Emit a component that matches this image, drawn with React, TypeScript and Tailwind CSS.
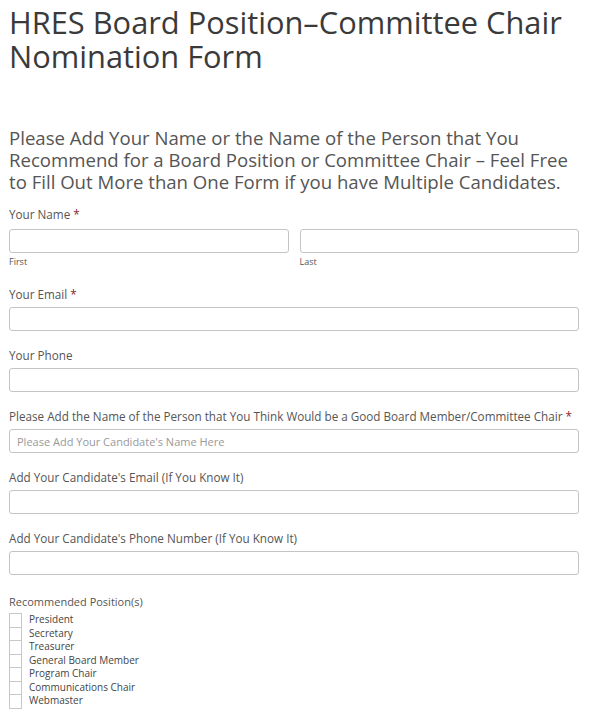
import React from "react";

const font = { fontFamily: '"Open Sans", "DejaVu Sans", sans-serif' };

const Req = () => <span className="text-[#8b2525]"> *</span>;

const Field = ({ label, required, placeholder }: { label: string; required?: boolean; placeholder?: string }) => (
  <div className="mt-[17px]">
    <label className="block text-[11.7px] leading-[15px] text-[#555]">
      {label}
      {required && <Req />}
    </label>
    <input
      type="text"
      placeholder={placeholder}
      className="mt-[5px] block w-full h-[24px] rounded-[3px] border border-[#c4c4c4] bg-white px-[7px] text-[11px] text-[#555] placeholder:text-[#999] outline-none"
    />
  </div>
);

const positions = [
  "President",
  "Secretary",
  "Treasurer",
  "General Board Member",
  "Program Chair",
  "Communications Chair",
  "Webmaster",
];

export default function App() {
  return (
    <div className="min-h-screen bg-white pl-[9px] pr-[11px] pb-2" style={font}>
      <h1 className="pt-[5px] text-[30.8px] leading-[34px] text-[#3a3a3a]">
        HRES Board Position–Committee Chair Nomination Form
      </h1>

      <h2 className="mt-[54px] text-[18.6px] leading-[22px] text-[#555]">
        Please Add Your Name or the Name of the Person that You Recommend for a Board Position or Committee Chair – Feel Free to Fill Out More than One Form if you have Multiple Candidates.
      </h2>

      <div className="mt-[14px] pb-[2px]">
        <label className="block text-[11.7px] leading-[15px] text-[#555]">
          Your Name<Req />
        </label>
        <div className="mt-[7px] grid grid-cols-2 gap-[11px]">
          <div>
            <input type="text" className="block w-full h-[24px] rounded-[3px] border border-[#c4c4c4] bg-white outline-none" />
            <span className="mt-[3px] block text-[9px] leading-[12px] text-[#555]">First</span>
          </div>
          <div>
            <input type="text" className="block w-full h-[24px] rounded-[3px] border border-[#c4c4c4] bg-white outline-none" />
            <span className="mt-[3px] block text-[9px] leading-[12px] text-[#555]">Last</span>
          </div>
        </div>
      </div>

      <Field label="Your Email" required />
      <Field label="Your Phone" />
      <Field
        label="Please Add the Name of the Person that You Think Would be a Good Board Member/Committee Chair"
        required
        placeholder="Please Add Your Candidate's Name Here"
      />
      <Field label="Add Your Candidate's Email (If You Know It)" />
      <Field label="Add Your Candidate's Phone Number (If You Know It)" />

      <div className="mt-[19px]">
        <div className="text-[11px] leading-[15px] text-[#555]">Recommended Position(s)</div>
        <div className="mt-[4px]">
          {positions.map((p) => (
            <label key={p} className="-mt-px flex items-start first:mt-0">
              <span className="block h-[14.5px] w-[13px] shrink-0 border border-[#c8c8c8] bg-white" />
              <span className="ml-[7px] text-[10px] leading-[13px] text-[#444]">{p}</span>
            </label>
          ))}
        </div>
      </div>
    </div>
  );
}
